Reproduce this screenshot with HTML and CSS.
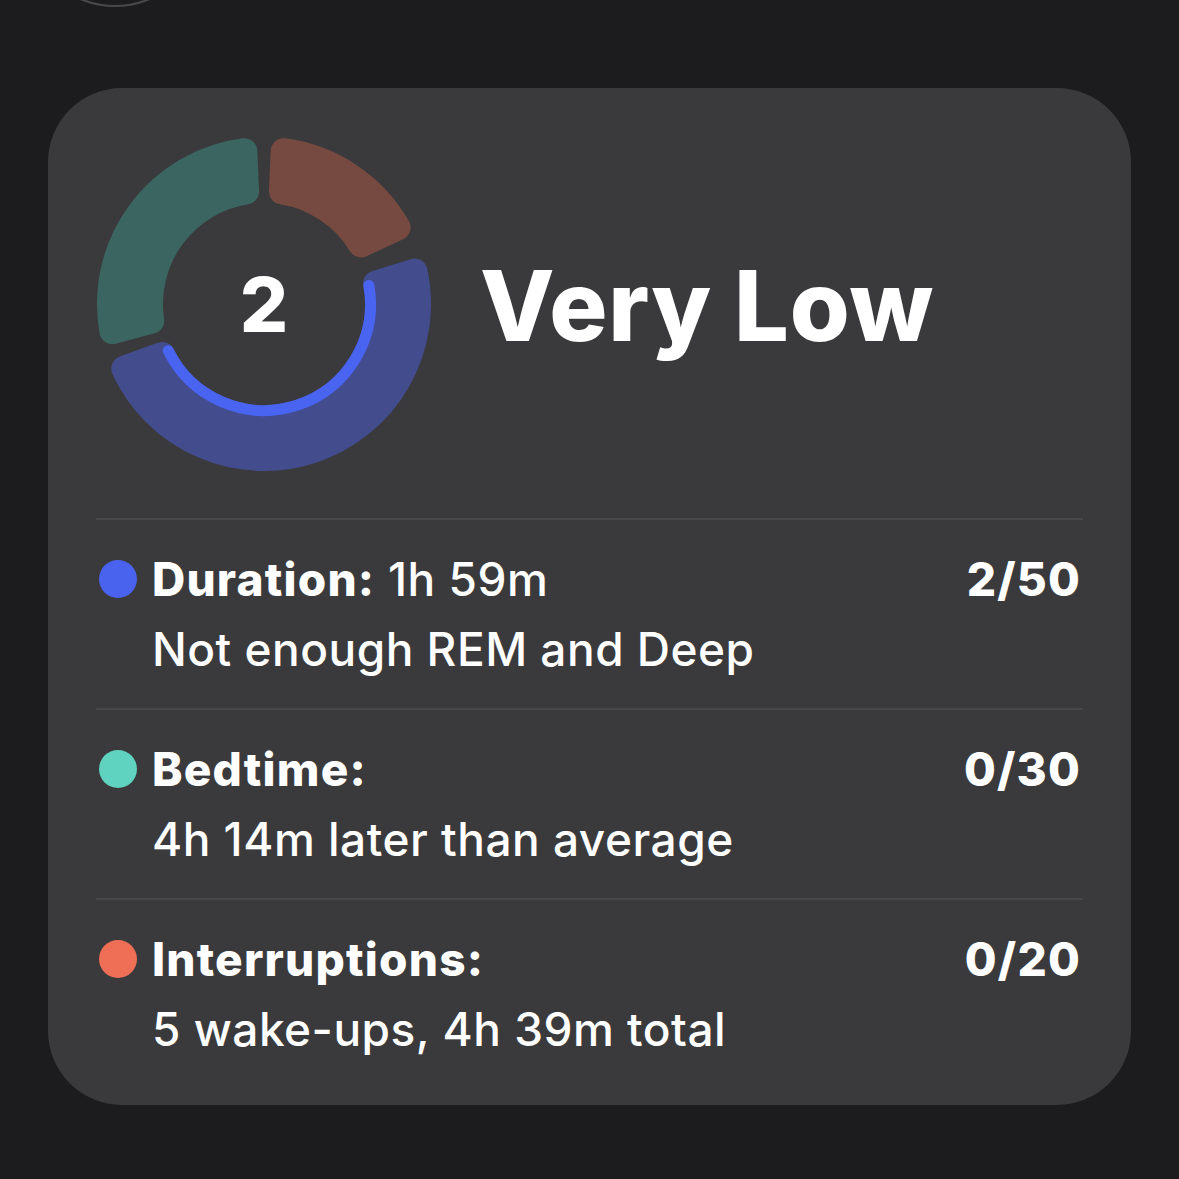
FILE: index.html
```html
<!DOCTYPE html>
<html lang="en">
<head>
    <meta charset="UTF-8">
    <meta name="viewport" content="width=device-width, initial-scale=1.0">
    <title>Sleep Score</title>
    <link rel="stylesheet" href="styles.css">
</head>
<body>
    <div class="avatar"></div>

    <div class="score-card">
        <div class="score-head">
            <div class="ring">
                <svg id="ring-svg" width="336" height="336" viewBox="0 0 336 336"></svg>
                <span class="ring-value">2</span>
            </div>
            <h1 class="score-label">Very Low</h1>
        </div>

        <div class="factor">
            <span class="dot dot-duration"></span>
            <div class="factor-text">
                <p><b>Duration:</b> 1h 59m</p>
                <p>Not enough REM and Deep</p>
            </div>
            <span class="factor-score">2/50</span>
        </div>

        <div class="factor">
            <span class="dot dot-bedtime"></span>
            <div class="factor-text">
                <p><b>Bedtime:</b></p>
                <p>4h 14m later than average</p>
            </div>
            <span class="factor-score">0/30</span>
        </div>

        <div class="factor">
            <span class="dot dot-interruptions"></span>
            <div class="factor-text">
                <p><b>Interruptions:</b></p>
                <p>5 wake-ups, 4h 39m total</p>
            </div>
            <span class="factor-score">0/20</span>
        </div>
    </div>

    <script src="ring.js"></script>
</body>
</html>
```

FILE: styles.css
```css
html, body {
    margin: 0;
    padding: 0;
    background: #1c1c1e;
    color: #ffffff;
    font-family: 'Inter', 'Noto Sans', sans-serif;
}

body {
    padding: 88px 48px 0;
    height: 1179px;
    box-sizing: border-box;
    position: relative;
    overflow: hidden;
}

.avatar {
    position: absolute;
    left: 25px;
    top: -173px;
    width: 180px;
    height: 180px;
    border-radius: 50%;
    border: 2px solid rgba(255, 255, 255, 0.2);
    box-sizing: border-box;
}

.score-card {
    background: #3a3a3c;
    border-radius: 74px;
    padding: 48px 48px 17px;
}

.score-head {
    display: flex;
    align-items: center;
    gap: 48px;
    padding-bottom: 46px;
}

.ring {
    display: grid;
    place-items: center;
    width: 336px;
    height: 336px;
}

.ring svg,
.ring-value {
    grid-area: 1 / 1;
}

.ring-value {
    font-size: 76px;
    font-weight: 800;
    line-height: 1;
}

.score-label {
    margin: 2px 0 0;
    font-size: 97px;
    font-weight: 800;
    letter-spacing: 0.8px;
    line-height: 1;
}

.factor {
    display: flex;
    align-items: flex-start;
    border-top: 2px solid #48484a;
    padding: 24px 0;
}

.dot {
    flex: none;
    width: 38px;
    height: 38px;
    border-radius: 50%;
    margin: 16px 15px 0 3px;
}

.dot-duration { background: #4a63ef; }
.dot-bedtime { background: #5fd3bf; }
.dot-interruptions { background: #ee6e56; }

.factor-text {
    flex: 1;
}

.factor-text p {
    margin: 0;
    font-size: 46px;
    font-weight: 500;
    letter-spacing: 0.5px;
    line-height: 70px;
}

.factor-text b {
    font-weight: 800;
    letter-spacing: 1.2px;
}

.factor-score {
    font-size: 46px;
    line-height: 70px;
    font-weight: 800;
    letter-spacing: 1.2px;
    padding-right: 2px;
}
```

FILE: ring.js
```javascript
// Score ring: one segment per factor, sized by its share of 100 points
var segments = [
    { from: 2.5, to: 65, color: '#764a40' },   // interruptions
    { from: 73, to: 250, color: '#434c8c' },   // duration
    { from: 255, to: 357.5, color: '#3b6561' } // bedtime
];

var cx = 168, cy = 168;
var inner = 101, outer = 167, corner = 13;

function point(r, deg) {
    var a = (deg - 90) * Math.PI / 180;
    return (cx + r * Math.cos(a)).toFixed(2) + ' ' + (cy + r * Math.sin(a)).toFixed(2);
}

// annular sector shrunk by the corner radius, then stroked back out with round joins
function sector(from, to) {
    var ro = outer - corner, ri = inner + corner;
    var dOut = Math.asin(corner / ro) * 180 / Math.PI;
    var dIn = Math.asin(corner / ri) * 180 / Math.PI;
    var large = (to - from) > 180 ? 1 : 0;
    return 'M ' + point(ro, from + dOut) +
        ' A ' + ro + ' ' + ro + ' 0 ' + large + ' 1 ' + point(ro, to - dOut) +
        ' L ' + point(ri, to - dIn) +
        ' A ' + ri + ' ' + ri + ' 0 ' + large + ' 0 ' + point(ri, from + dIn) + ' Z';
}

function arc(r, from, to) {
    var large = (to - from) > 180 ? 1 : 0;
    return 'M ' + point(r, from) + ' A ' + r + ' ' + r + ' 0 ' + large + ' 1 ' + point(r, to);
}

var svg = document.getElementById('ring-svg');
var html = '';
segments.forEach(function (s) {
    html += '<path d="' + sector(s.from, s.to) + '" fill="' + s.color + '" stroke="' + s.color +
        '" stroke-width="' + corner * 2 + '" stroke-linejoin="round"/>';
});
html += '<path d="' + arc(106.5, 80, 244) + '" fill="none" stroke="#4a64f2" stroke-width="11" stroke-linecap="round"/>';
svg.innerHTML = html;
```
